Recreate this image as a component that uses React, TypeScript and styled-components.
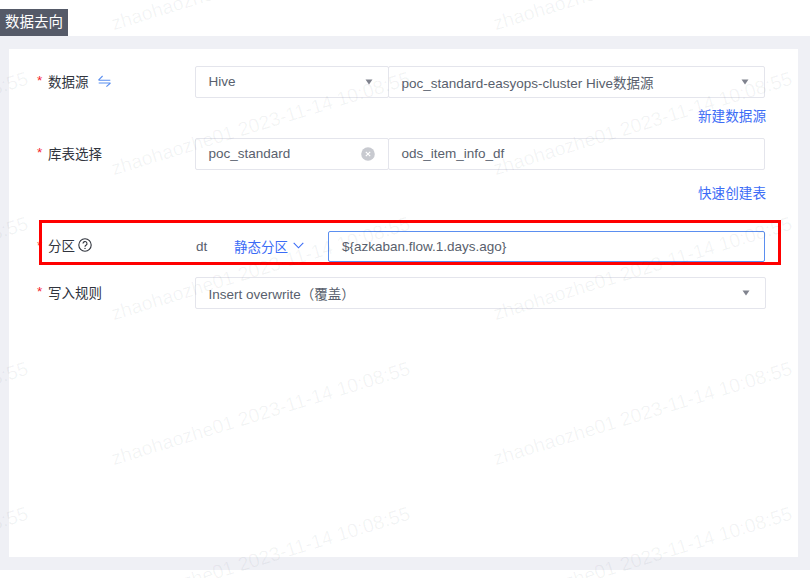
import React from 'react';
import styled, { createGlobalStyle } from 'styled-components';

const GlobalStyle = createGlobalStyle`
  html, body {
    margin: 0;
    padding: 0;
    background: #fff;
  }
  body {
    font-family: "Liberation Sans", "Noto Sans CJK SC", sans-serif;
    font-size: 13.5px;
    color: #595f6d;
  }
`;

const Page = styled.div`
  position: relative;
  width: 810px;
  height: 578px;
  overflow: hidden;
  padding-top: 9px;
  box-sizing: border-box;
`;

const Tab = styled.div`
  width: 68px;
  height: 27px;
  line-height: 26px;
  background: #555a68;
  color: #fff;
  font-size: 14.5px;
  padding-left: 5px;
  box-sizing: border-box;
`;

const Panel = styled.div`
  height: 534px;
  background: #eff0f5;
  padding: 13px 12px 13px 9px;
  box-sizing: border-box;
`;

const Card = styled.div`
  height: 100%;
  background: #fff;
  padding: 17px 33px 0 28px;
  box-sizing: border-box;
`;

const Row = styled.div`
  display: flex;
  align-items: center;
`;

const Label = styled.div`
  flex: 0 0 158px;
  display: flex;
  align-items: center;
  color: #30343d;
  padding-bottom: 3px;
  box-sizing: border-box;
`;

const Star = styled.span`
  color: #f5222d;
  width: 11px;
  font-family: "Liberation Sans", sans-serif;
`;

const Controls = styled.div<{ $extra?: number }>`
  flex: 1;
  display: flex;
  align-items: center;
  margin-right: ${(p) => -(p.$extra ?? 0)}px;
`;

const Box = styled.div<{ $width?: number; $joined?: boolean }>`
  ${(p) => (p.$width ? `flex: 0 0 ${p.$width}px;` : 'flex: 1;')}
  height: 32px;
  display: flex;
  align-items: center;
  justify-content: space-between;
  border: 1px solid #e4e5ec;
  border-radius: 2px;
  padding: 0 15px 1px 12.5px;
  box-sizing: border-box;
  white-space: nowrap;
  ${(p) => p.$joined && 'margin-left: -1px;'}
`;

const ActiveInput = styled.div`
  flex: 1;
  height: 31px;
  display: flex;
  align-items: center;
  border: 1px solid #5b8ff0;
  border-radius: 2px;
  padding: 0 0 1px 13px;
  box-sizing: border-box;
`;

const HintRow = styled.div<{ $height: number; $top: number }>`
  height: ${(p) => p.$height}px;
  padding-top: ${(p) => p.$top}px;
  box-sizing: border-box;
  text-align: right;
  margin-right: -1px;
`;

const Link = styled.a`
  color: #3b6cf6;
  font-size: 13.6px;
  line-height: 20px;
  display: inline-block;
`;

const FieldName = styled.span`
  flex: 0 0 38px;
  margin-left: 1px;
  padding-bottom: 1px;
`;

const ModeSwitch = styled.span`
  flex: 0 0 94px;
  display: flex;
  align-items: center;
  gap: 5px;
  color: #3b6cf6;
  padding-bottom: 2px;
`;

const Gap = styled.div<{ $h: number }>`
  height: ${(p) => p.$h}px;
`;

const Icon = styled.svg<{ $left?: number; $right?: number }>`
  flex: none;
  margin-left: ${(p) => p.$left ?? 0}px;
  margin-right: ${(p) => p.$right ?? 0}px;
`;

const Highlight = styled.div`
  position: absolute;
  left: 39px;
  top: 220px;
  width: 742px;
  height: 45px;
  border: 3px solid #f00;
  box-sizing: border-box;
  pointer-events: none;
`;

const Watermarks = styled.div`
  position: absolute;
  left: -312px;
  top: -94px;
  display: grid;
  grid-template-columns: repeat(4, 382px);
  grid-auto-rows: 145px;
  pointer-events: none;
`;

const Mark = styled.span`
  justify-self: center;
  align-self: center;
  white-space: nowrap;
  font-size: 19.4px;
  font-family: "Liberation Sans", sans-serif;
  color: rgba(60, 65, 85, 0.06);
  transform: rotate(-17deg);
`;

const Caret = () => (
  <Icon width="8" height="6" viewBox="0 0 8 6">
    <path d="M0.5 0.5h7L4 5.5z" fill="#80838e" />
  </Icon>
);

const ClearIcon = () => (
  <Icon $right={-2} width="14" height="14" viewBox="0 0 14 14">
    <circle cx="7" cy="7" r="6.8" fill="#c8cad0" />
    <path d="M4.8 4.8l4.4 4.4M9.2 4.8l-4.4 4.4" stroke="#fff" strokeWidth="1.2" />
  </Icon>
);

const SwapIcon = () => (
  <Icon $left={9} width="13" height="12" viewBox="0 0 13 12">
    <path d="M0.5 5.2H12.3M0.5 5.2L4.6 1" stroke="#5b8ff0" strokeWidth="1.1" fill="none" />
    <path d="M0.7 8H12.5M12.5 8L8.4 11.6" stroke="#5b8ff0" strokeWidth="1.1" fill="none" />
  </Icon>
);

const HelpIcon = () => (
  <Icon $left={3} width="14" height="14" viewBox="0 0 14 14">
    <circle cx="7" cy="7" r="6.2" fill="none" stroke="#30343d" strokeWidth="1.1" />
    <path d="M5 5.6a2 2 0 1 1 3 1.7c-.7.4-1 .8-1 1.5" fill="none" stroke="#30343d" strokeWidth="1.1" />
    <circle cx="7" cy="10.4" r="0.7" fill="#30343d" />
  </Icon>
);

const Chevron = () => (
  <Icon width="11" height="7" viewBox="0 0 11 7">
    <path d="M0.7 0.8L5.5 5.8L10.3 0.8" fill="none" stroke="#3b6cf6" strokeWidth="1.1" />
  </Icon>
);

const watermarkCells = Array.from({ length: 20 }, (_, i) => i);

export default function App() {
  return (
    <Page>
      <GlobalStyle />
      <Tab>数据去向</Tab>
      <Panel>
        <Card>
          <Row>
            <Label>
              <Star>*</Star>数据源
              <SwapIcon />
            </Label>
            <Controls>
              <Box $width={194}>
                Hive
                <Caret />
              </Box>
              <Box $joined>
                poc_standard-easyops-cluster Hive数据源
                <Caret />
              </Box>
            </Controls>
          </Row>
          <HintRow $height={40} $top={9}>
            <Link>新建数据源</Link>
          </HintRow>
          <Row>
            <Label>
              <Star>*</Star>库表选择
            </Label>
            <Controls>
              <Box $width={194}>
                poc_standard
                <ClearIcon />
              </Box>
              <Box $joined>ods_item_info_df</Box>
            </Controls>
          </Row>
          <HintRow $height={61} $top={14}>
            <Link>快速创建表</Link>
          </HintRow>
          <Row>
            <Label>
              <Star>*</Star>分区
              <HelpIcon />
            </Label>
            <Controls>
              <FieldName>dt</FieldName>
              <ModeSwitch>
                静态分区
                <Chevron />
              </ModeSwitch>
              <ActiveInput>{'${azkaban.flow.1.days.ago}'}</ActiveInput>
            </Controls>
          </Row>
          <Gap $h={15} />
          <Row>
            <Label>
              <Star>*</Star>写入规则
            </Label>
            <Controls $extra={1}>
              <Box>
                Insert overwrite（覆盖）
                <Caret />
              </Box>
            </Controls>
          </Row>
        </Card>
      </Panel>
      <Highlight />
      <Watermarks>
        {watermarkCells.map((i) => (
          <Mark key={i}>zhaohaozhe01 2023-11-14 10:08:55</Mark>
        ))}
      </Watermarks>
    </Page>
  );
}
